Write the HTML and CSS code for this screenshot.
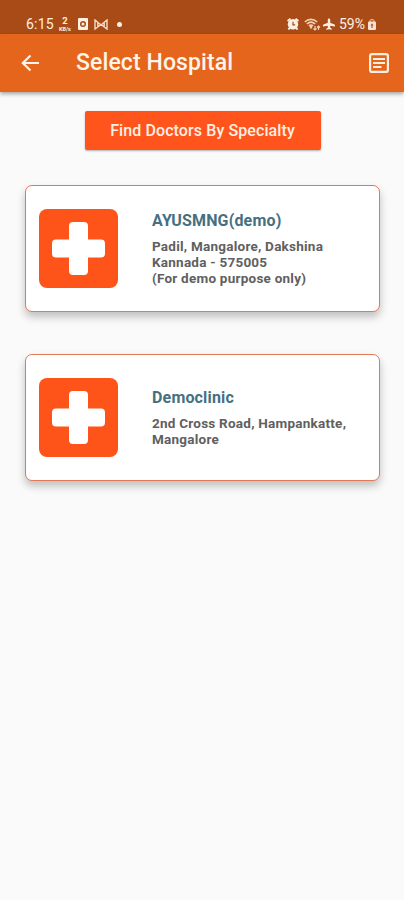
FILE: index.html
```html
<!DOCTYPE html>
<html lang="en">
<head>
    <meta charset="UTF-8">
    <meta name="viewport" content="width=device-width, initial-scale=1.0">
    <title>Select Hospital</title>
    <link rel="stylesheet" href="styles.css">
</head>
<body>
    <!-- Status Bar -->
    <div class="status-bar">
        <div class="status-left">
            <span class="time">6:15</span>
            <span class="net-speed"><b>2</b><small>KB/s</small></span>
            <svg class="rec-icon" width="10" height="12" viewBox="0 0 10 12">
                <rect width="10" height="12" rx="1" fill="#fff0e4"/>
                <circle cx="5" cy="6" r="2.3" fill="none" stroke="#a94b16" stroke-width="1.5"/>
            </svg>
            <svg class="mail-icon" width="14" height="11" viewBox="0 0 14 11" fill="none" stroke="#f6d9c5" stroke-width="1.4">
                <path d="M1 10V1l6 5 6-5v9L7 5.500 1 10zM3.800 3v5.500M10.200 3v5.500"/>
            </svg>
            <span class="dot"></span>
        </div>
        <div class="status-right">
            <svg class="alarm-icon" width="12" height="12" viewBox="0 0 12 12">
                <path d="M.5 3L3.500.8M11.500 3L8.500.8M2.500 10l-1 1.500M9.500 10l1 1.500" stroke="#fff0e4" stroke-width="2"/>
                <circle cx="6" cy="6.300" r="5.200" fill="#fff0e4"/>
                <path d="M6 3.800v3h2.200" fill="none" stroke="#a94b16" stroke-width="1.200"/>
            </svg>
            <svg class="wifi-icon" width="17" height="13" viewBox="0 0 17 13" fill="none" stroke="#f3cfb6">
                <path d="M.8 4C4.500.5 9.500.5 13.200 4M2.800 6c2.600-2.300 5.800-2.300 8.400 0M4.800 8c1.500-1.200 2.900-1.200 4.400 0" stroke-width="1.600"/>
                <path d="M7 8v2.500" stroke-width="2.200"/>
                <path d="M11 8v4M9.500 10.500l1.500 1.500 1.500-1.500M14.500 12V8M13 9.500L14.500 8 16 9.500" stroke-width="1.200"/>
            </svg>
            <svg class="plane-icon" width="12" height="12" viewBox="0 0 12 12">
                <path d="M6 .5c.8 0 1.200.6 1.200 1.300v3L12 6.800v1.600l-4.800-.6v2l1.600 1v1L6 11.200l-2.800.6v-1l1.600-1v-2L0 8.400V6.800l4.800-2v-3C4.800 1.100 5.200.5 6 .5z" fill="#fff0e4"/>
            </svg>
            <span class="battery">59%</span>
            <svg class="battery-icon" width="8" height="11" viewBox="0 0 8 11">
                <path d="M2 3V1.500A1 1 0 0 1 3 .7h2a1 1 0 0 1 1 .8V3" fill="none" stroke="#f3cfb6"/>
                <rect y="2.500" width="8" height="8.500" rx="1.200" fill="#f9e2d1"/>
                <path d="M4 4.300L2.500 6.800h3zM3.500 6.500h1v2.500h-1z" fill="#a94b16"/>
            </svg>
        </div>
    </div>

    <!-- App Bar -->
    <header>
        <svg class="back-icon" width="24" height="24" viewBox="0 0 24 24">
            <path d="M21 12H5M12.500 4.500L4.800 12l7.700 7.500" fill="none" stroke="#fff4ea" stroke-width="2.200"/>
        </svg>
        <h1>Select Hospital</h1>
        <svg class="article-icon" width="20" height="20" viewBox="0 0 20 20" fill="none" stroke="#fff0e0">
            <rect x="1.100" y="1.100" width="17.800" height="17.800" rx="2" stroke-width="2.200"/>
            <path d="M4 6h12M4 10h12M4 14h8.500" stroke-width="2"/>
        </svg>
    </header>

    <main>
        <button class="btn">Find Doctors By Specialty</button>

        <div class="card">
            <svg class="hospital-icon" width="79" height="79" viewBox="0 0 79 79">
                <rect width="79" height="79" rx="8" fill="#ff5419"/>
                <path d="M34 13h11a4 4 0 0 1 4 4v13.500h13a4 4 0 0 1 4 4v10a4 4 0 0 1-4 4H49V62a4 4 0 0 1-4 4H34a4 4 0 0 1-4-4V48.500H17a4 4 0 0 1-4-4v-10a4 4 0 0 1 4-4h13V17a4 4 0 0 1 4-4z" fill="#fff"/>
            </svg>
            <div class="card-info">
                <h2>AYUSMNG(demo)</h2>
                <p>Padil, Mangalore, Dakshina<br>Kannada - 575005<br>(For demo purpose only)</p>
            </div>
        </div>

        <div class="card">
            <svg class="hospital-icon" width="79" height="79" viewBox="0 0 79 79">
                <rect width="79" height="79" rx="8" fill="#ff5419"/>
                <path d="M34 13h11a4 4 0 0 1 4 4v13.500h13a4 4 0 0 1 4 4v10a4 4 0 0 1-4 4H49V62a4 4 0 0 1-4 4H34a4 4 0 0 1-4-4V48.500H17a4 4 0 0 1-4-4v-10a4 4 0 0 1 4-4h13V17a4 4 0 0 1 4-4z" fill="#fff"/>
            </svg>
            <div class="card-info">
                <h2>Democlinic</h2>
                <p>2nd Cross Road, Hampankatte,<br>Mangalore</p>
            </div>
        </div>
    </main>
</body>
</html>
```

FILE: styles.css
```css
* {
    box-sizing: border-box;
}

body {
    font-family: Roboto, "Liberation Sans", sans-serif;
    background-color: #fafafa;
    margin: 0;
    min-height: 900px;
}

.status-bar {
    display: flex;
    justify-content: space-between;
    height: 34px;
    padding: 14px 28px 0 26px;
    background-color: #a94b16;
    color: #fff0e4;
    font-size: 14px;
    line-height: 20px;
}

.status-left,
.status-right {
    display: flex;
    align-items: center;
    height: 20px;
}

.time {
    width: 32px;
    letter-spacing: 0.2px;
}

.net-speed {
    display: flex;
    flex-direction: column;
    align-items: center;
    width: 14px;
    margin-right: 6px;
}

.net-speed b {
    font-size: 9.5px;
    line-height: 10px;
}

.net-speed small {
    font-size: 5.5px;
    font-weight: 700;
    line-height: 6px;
}

.mail-icon {
    margin-left: 6px;
}

.dot {
    width: 5px;
    height: 5px;
    margin-left: 9px;
    border-radius: 50%;
    background-color: #fff0e4;
}

.wifi-icon {
    margin-left: 5px;
}

.plane-icon {
    margin-left: 2px;
}

.battery {
    margin-left: 4px;
    width: 28px;
}

.battery-icon {
    margin-left: 1px;
}

header {
    display: flex;
    align-items: center;
    height: 58px;
    padding: 0 15px 0 18px;
    background-color: #e4651b;
    box-shadow: 0 2px 4px rgba(0, 0, 0, 0.35);
}

h1 {
    flex: 1;
    margin: 0 0 0 34px;
    color: #fff4ea;
    font-size: 23px;
    font-weight: 500;
    letter-spacing: 0.1px;
    line-height: 28px;
}

main {
    display: flex;
    flex-direction: column;
    align-items: center;
    padding: 19px 24px 0 25px;
}

.btn {
    width: 236px;
    height: 39px;
    margin-bottom: 35px;
    padding: 0;
    border: none;
    border-radius: 2px;
    background-color: #ff541b;
    color: #fff0e4;
    font-family: inherit;
    font-size: 16px;
    font-weight: 500;
    letter-spacing: 0.1px;
    box-shadow: 0 1px 2px rgba(0, 0, 0, 0.3);
}

.card {
    display: flex;
    align-items: center;
    width: 355px;
    height: 127px;
    margin-bottom: 42px;
    padding-left: 13px;
    border: 1px solid #e0785a;
    border-radius: 7px;
    background-color: #fff;
    box-shadow: 0 5px 8px rgba(0, 0, 0, 0.24);
}

.card-info {
    margin-left: 34px;
}

.card h2 {
    margin: 0 0 8px;
    color: #457080;
    font-size: 16px;
    font-weight: 700;
    letter-spacing: 0.17px;
    line-height: 19px;
}

.card p {
    margin: 0;
    color: #606060;
    font-size: 13.5px;
    font-weight: 700;
    letter-spacing: 0.24px;
    line-height: 16px;
    white-space: nowrap;
}
```
